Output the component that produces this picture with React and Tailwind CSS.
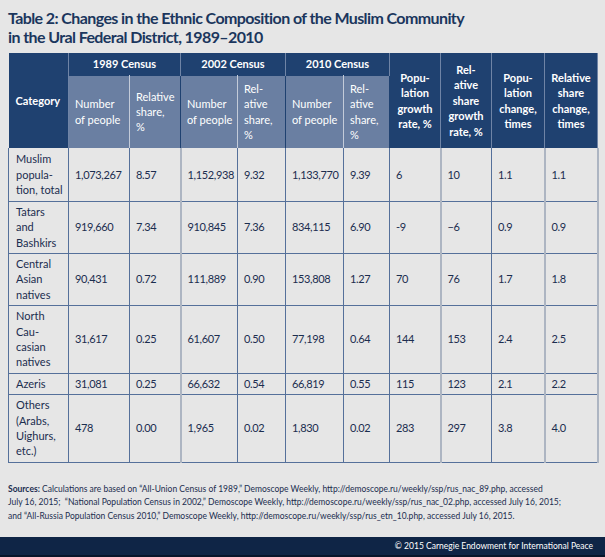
import React from "react";

const cols = [60, 61, 51, 57, 48, 58, 46, 51, 51, 53, 53];

const rows = [
  { h: "h-[53px]", cat: ["Muslim", "popula-", "tion, total"], v: ["1,073,267", "8.57", "1,152,938", "9.32", "1,133,770", "9.39", "6", "10", "1.1", "1.1"] },
  { h: "h-[52px]", cat: ["Tatars", "and", "Bashkirs"], v: ["919,660", "7.34", "910,845", "7.36", "834,115", "6.90", "-9", "\u22126", "0.9", "0.9"] },
  { h: "h-[52px]", cat: ["Central", "Asian", "natives"], v: ["90,431", "0.72", "111,889", "0.90", "153,808", "1.27", "70", "76", "1.7", "1.8"] },
  { h: "h-[68px]", cat: ["North", "Cau-", "casian", "natives"], v: ["31,617", "0.25", "61,607", "0.50", "77,198", "0.64", "144", "153", "2.4", "2.5"] },
  { h: "h-[21px]", cat: ["Azeris"], v: ["31,081", "0.25", "66,632", "0.54", "66,819", "0.55", "115", "123", "2.1", "2.2"] },
  { h: "h-[68px]", cat: ["Others", "(Arabs,", "Uighurs,", "etc.)"], v: ["478", "0.00", "1,965", "0.02", "1,830", "0.02", "283", "297", "3.8", "4.0"] },
];

// cells followed by a thick grey divider
const thick = new Set([2, 7, 9, 10]);

const Lines = ({ lines }) =>
  lines.map((l, i) => (
    <React.Fragment key={i}>
      {l}
      {i < lines.length - 1 && <br />}
    </React.Fragment>
  ));

export default function App() {
  return (
    <div className="w-[605px] h-[557px] bg-[#e6e6e6] flex flex-col font-['Lato',sans-serif] overflow-hidden">
      <h1 className="px-[8px] pt-[9px] text-[16px] leading-[18.5px] font-bold text-[#1b365d] tracking-[-0.6px]">
        Table 2: Changes in the Ethnic Composition of the Muslim Community
        <br />
        in the Ural Federal District, 1989–2010
      </h1>

      <div className="px-[8px] mt-[7px]">
        <table className="table-fixed border-collapse w-[589px] text-[11px] leading-[15.4px]">
          <colgroup>
            {cols.map((w, i) => (
              <col key={i} style={{ width: w }} />
            ))}
          </colgroup>
          <thead>
            <tr className="h-[22px] text-white font-bold">
              <th rowSpan={2} className="bg-[#1f4170] text-left pl-[7px] border-r border-[#6f84a6]">
                Category
              </th>
              <th colSpan={2} className="bg-[#1f4170] text-center border-r border-[#6f84a6]">
                1989 Census
              </th>
              <th colSpan={2} className="bg-[#1f4170] text-center border-r border-[#6f84a6]">
                2002 Census
              </th>
              <th colSpan={2} className="bg-[#1f4170] text-center border-r border-[#6f84a6]">
                2010 Census
              </th>
              <th rowSpan={2} className="bg-[#1f4170] text-center border-r border-[#6f84a6]">
                Popu-<br />lation<br />growth<br />rate, %
              </th>
              <th rowSpan={2} className="bg-[#1f4170] text-center border-r border-[#6f84a6]">
                Rel-<br />ative<br />share<br />growth<br />rate, %
              </th>
              <th rowSpan={2} className="bg-[#1f4170] text-center border-r border-[#6f84a6]">
                Popu-<br />lation<br />change,<br />times
              </th>
              <th rowSpan={2} className="bg-[#1f4170] text-center border-r border-[#6f84a6]">
                Relative<br />share<br />change,<br />times
              </th>
            </tr>
            <tr className="h-[73px] text-white font-normal">
              <th className="bg-[#6a7fa2] font-normal text-left pl-[6px] border-r border-t border-[#c3cbd9] border-t-[#1f4170]">
                Number<br />of people
              </th>
              <th className="bg-[#6a7fa2] font-normal text-left pl-[6px] border-r border-t border-[#1f4170] border-t-[#1f4170]">
                Relative<br />share,<br />%
              </th>
              <th className="bg-[#6a7fa2] font-normal text-left pl-[6px] border-r border-t border-[#c3cbd9] border-t-[#1f4170]">
                Number<br />of people
              </th>
              <th className="bg-[#6a7fa2] font-normal text-left pl-[6px] border-r border-t border-[#1f4170] border-t-[#1f4170]">
                Rel-<br />ative<br />share,<br />%
              </th>
              <th className="bg-[#6a7fa2] font-normal text-left pl-[6px] border-r border-t border-[#c3cbd9] border-t-[#1f4170]">
                Number<br />of people
              </th>
              <th className="bg-[#6a7fa2] font-normal text-left pl-[6px] border-r border-t border-[#1f4170] border-t-[#1f4170]">
                Rel-<br />ative<br />share,<br />%
              </th>
            </tr>
          </thead>
          <tbody className="text-[#1b2d4f]">
            {rows.map((r, ri) => (
              <tr key={ri} className={r.h}>
                <td className="pl-[7px] py-[2px] align-middle border-l border-b border-r border-[#55709a]">
                  <Lines lines={r.cat} />
                </td>
                {r.v.map((v, ci) => (
                  <td
                    key={ci}
                    className={
                      "pl-[6px] align-middle whitespace-nowrap tracking-[-0.35px] border-b border-b-[#55709a] " +
                      (thick.has(ci + 1)
                        ? "border-r-2 border-r-[#adb5c2]"
                        : "border-r border-r-[#55709a]")
                    }
                  >
                    {v}
                  </td>
                ))}
              </tr>
            ))}
          </tbody>
        </table>
      </div>

      <p className="px-[8px] mt-[20px] text-[8.5px] leading-[13.5px] text-[#1b2d4f] whitespace-nowrap">
        <span className="font-bold">Sources:</span> Calculations are based on “All-Union Census of 1989,” Demoscope Weekly, http://demoscope.ru/weekly/ssp/rus_nac_89.php, accessed
        <br />
        July 16, 2015;&nbsp; “National Population Census in 2002,” Demoscope Weekly, http://demoscope.ru/weekly/ssp/rus_nac_02.php, accessed July 16, 2015;
        <br />
        and “All-Russia Population Census 2010,” Demoscope Weekly, http://demoscope.ru/weekly/ssp/rus_etn_10.php, accessed July 16, 2015.
      </p>

      <div className="mt-auto">
        <div className="h-[18px] bg-[#0f2546] flex items-center justify-end pr-[12px]">
          <span className="text-[8.5px] text-white">© 2015 Carnegie Endowment for International Peace</span>
        </div>
        <div className="h-[2px] bg-[#07152b]" />
      </div>
    </div>
  );
}
